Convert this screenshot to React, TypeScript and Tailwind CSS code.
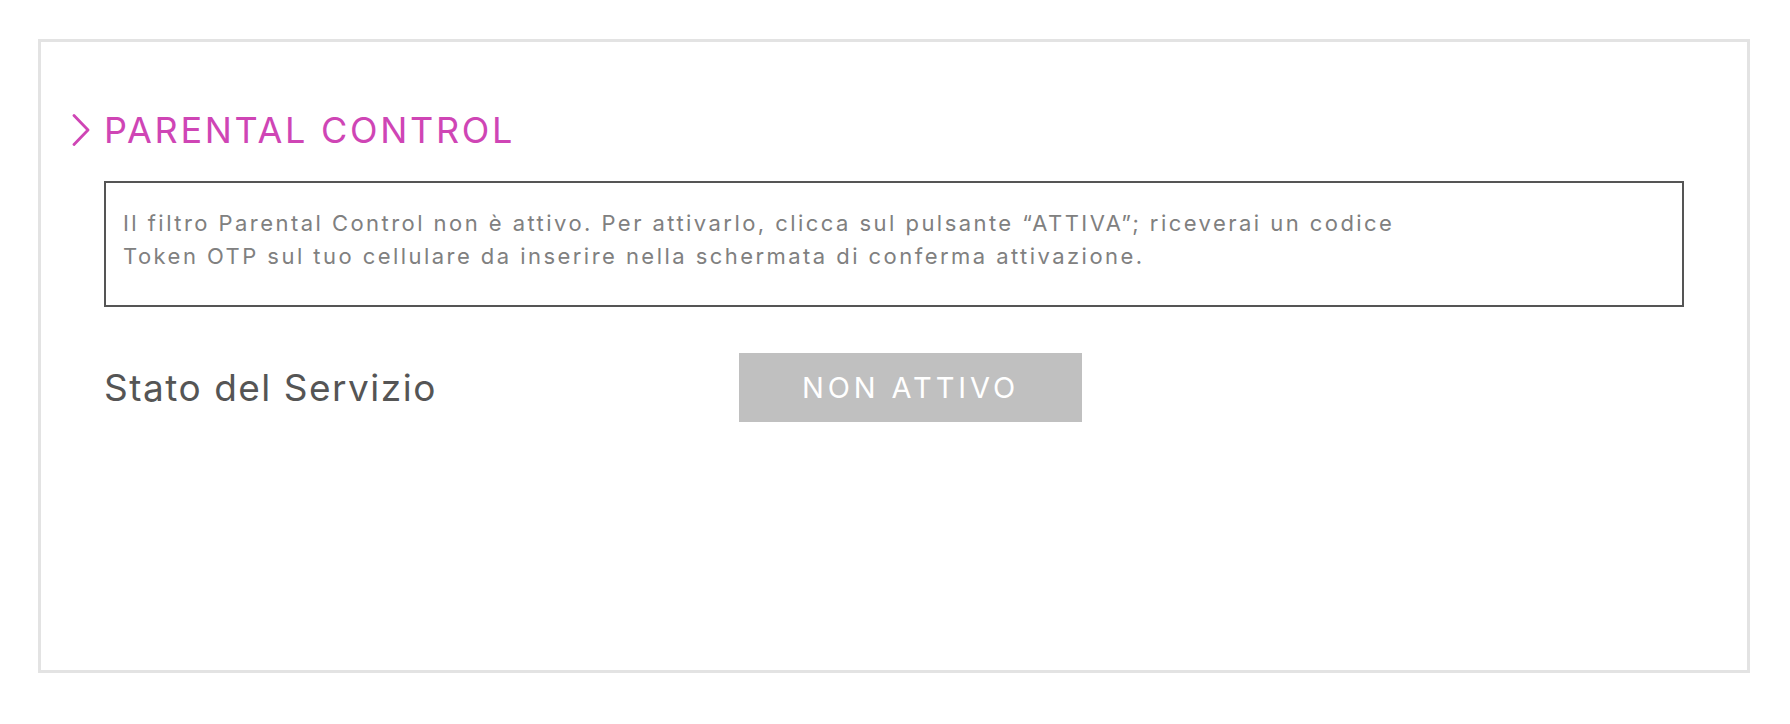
export default function App() {
  return (
    <div className="min-h-screen bg-white pt-[39px] pl-[38px] pr-[40px] font-['Inter',sans-serif]">
      <div className="h-[634px] border-[3px] border-[#e3e3e3] pl-[31px] pr-[63px] pt-[66px]">
        {/* heading */}
        <div className="flex items-center h-[44px]">
          <svg width="18" height="32" viewBox="0 0 18 32" className="mr-[14px]" fill="none">
            <path d="M2 1.5 L16 16 L2 30.5" stroke="#cf45b5" strokeWidth="2.8" strokeLinecap="round" strokeLinejoin="round" />
          </svg>
          <h2 className="text-[36px] leading-[44px] text-[#cf45b5] tracking-[2.7px]">PARENTAL CONTROL</h2>
        </div>

        {/* info box */}
        <div className="ml-[32px] mt-[29px] h-[126px] border-2 border-[#555] pl-[17px] pt-[24px]">
          <p className="text-[22px] leading-[33px] text-[#808080] tracking-[2.45px] whitespace-nowrap">
            Il filtro Parental Control non è attivo. Per attivarlo, clicca sul pulsante “ATTIVA”; riceverai un codice
            <br />
            Token OTP sul tuo cellulare da inserire nella schermata di conferma attivazione.
          </p>
        </div>

        {/* service status */}
        <div className="ml-[32px] mt-[46px] flex items-center">
          <span className="w-[635px] text-[37px] text-[#555] tracking-[1.5px]">Stato del Servizio</span>
          <div className="w-[343px] h-[69px] bg-[#c0c0c0] flex items-center justify-center text-white text-[29px] tracking-[3.9px]">
            NON ATTIVO
          </div>
        </div>
      </div>
    </div>
  )
}
